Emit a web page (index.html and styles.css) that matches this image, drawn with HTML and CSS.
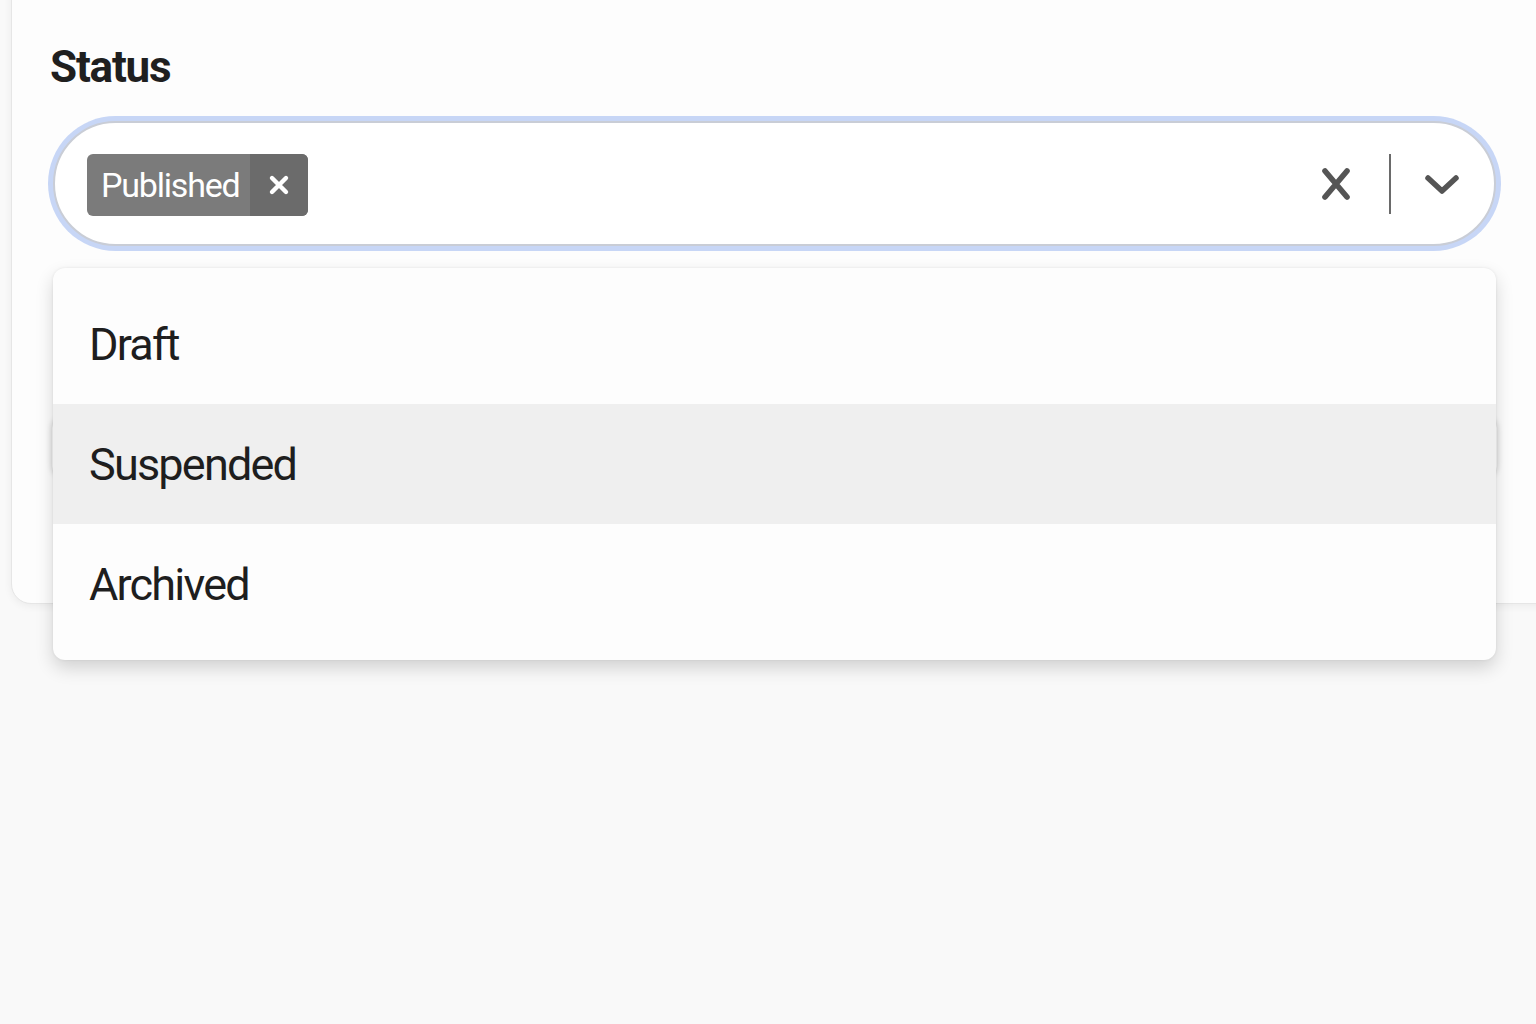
FILE: index.html
```html
<!DOCTYPE html>
<html lang="en">
<head>
<meta charset="utf-8">
<title>Status select</title>
<link rel="stylesheet" href="styles.css">
</head>
<body>
<main class="card">
  <h2 class="field-label">Status</h2>
  <div class="select-wrap">
    <div class="select">
      <div class="values">
        <span class="chip"><span class="chip-label">Published</span><span class="chip-remove"><svg width="22" height="22" viewBox="0 0 22 22"><path d="M4 4L18 18M18 4L4 18" stroke="#fff" stroke-width="4.4" stroke-linecap="round"/></svg></span></span>
      </div>
      <div class="indicators">
        <span class="clear"><svg width="32" height="36" viewBox="0 0 32 36"><path d="M5 5L27 31M27 5L5 31" stroke="#555" stroke-width="5.6" stroke-linecap="round"/></svg></span>
        <span class="sep"></span>
        <span class="chev"><svg width="36" height="24" viewBox="0 0 36 24"><path d="M4 5L18 18L32 5" fill="none" stroke="#555" stroke-width="5.5" stroke-linecap="round" stroke-linejoin="round"/></svg></span>
      </div>
    </div>
    <ul class="menu">
      <li class="option">Draft</li>
      <li class="option active">Suspended</li>
      <li class="option">Archived</li>
    </ul>
  </div>
  <div class="under-button"></div>
</main>
</body>
</html>
```
FILE: styles.css
```css
html, body {
  margin: 0;
  padding: 0;
}
body {
  background: #f9f9f9;
  font-family: Roboto, "Liberation Sans", sans-serif;
  color: #1e1e1e;
  overflow: hidden;
  height: 1024px;
}
.card {
  margin: -30px -40px 0 11px;
  background: #fdfdfd;
  border: 1px solid #e6e6e6;
  border-radius: 0 0 20px 20px;
  box-shadow: 0 2px 8px rgba(0,0,0,0.06);
  padding: 70px 40px 0 40px;
  height: 634px;
  box-sizing: border-box;
}
.field-label {
  margin: 0 0 28px -2px;
  font-size: 44px;
  font-weight: 700;
  line-height: 52px;
  letter-spacing: -1.2px;
  color: #1f1f1f;
}
.select-wrap {
  position: relative;
  margin-left: 1px;
  width: 1443px;
}
.select {
  display: flex;
  align-items: center;
  justify-content: space-between;
  height: 125px;
  box-sizing: border-box;
  border: 2px solid #c9cdd6;
  border-radius: 64px;
  background: #fff;
  box-shadow: 0 0 0 5px #c7d6f6;
  padding: 0 34px 0 32px;
}
.values {
  display: flex;
  align-items: center;
  padding-top: 2px;
}
.chip {
  display: inline-flex;
  align-items: stretch;
  height: 62px;
  border-radius: 6px;
  overflow: hidden;
  background: #7b7b7b;
  color: #fff;
}
.chip-label {
  display: flex;
  align-items: center;
  padding: 0 10px 0 14px;
  font-size: 34px;
  letter-spacing: -1.2px;
}
.chip-remove {
  display: flex;
  align-items: center;
  justify-content: center;
  width: 58px;
  background: #6b6b6b;
}
.indicators {
  display: flex;
  align-items: center;
}
.clear {
  display: flex;
  margin-right: 37px;
}
.sep {
  width: 2px;
  height: 60px;
  background: #6a6a6a;
  margin-right: 33px;
}
.chev {
  display: flex;
  margin-top: 2px;
}
.menu {
  position: absolute;
  top: 147px;
  left: 0;
  right: 0;
  z-index: 5;
  list-style: none;
  margin: 0;
  padding: 16px 0;
  background: #fdfdfd;
  border-radius: 12px;
  box-shadow: 0 8px 18px rgba(0,0,0,0.16), 0 0 3px rgba(0,0,0,0.08);
}
.option {
  height: 120px;
  display: flex;
  align-items: center;
  padding-left: 36px;
  font-size: 45px;
  letter-spacing: -1.8px;
  color: #1e1e1e;
}
.option.active {
  background: #efefef;
}
.under-button {
  margin-top: 172px;
  width: 1445px;
  height: 58px;
  border-radius: 10px;
  background: #fbfbfb;
  box-shadow: 0 0 6px rgba(0,0,0,0.2);
}
```
